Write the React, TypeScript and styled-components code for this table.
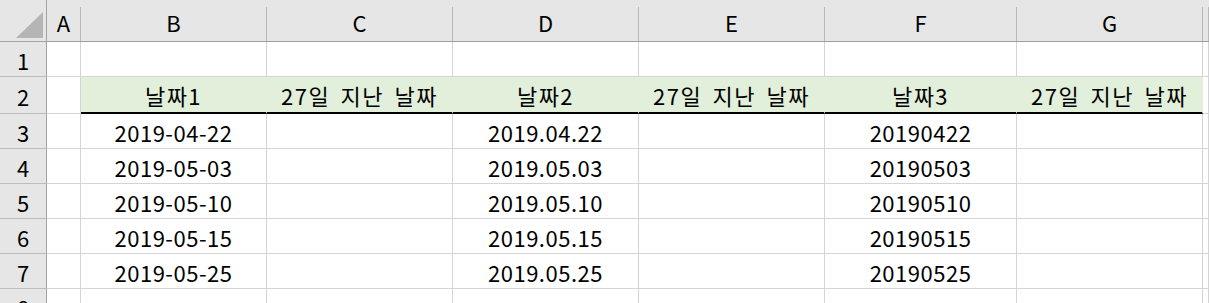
import React from "react";
import styled, { createGlobalStyle } from "styled-components";

const Global = createGlobalStyle`
  html, body { margin: 0; padding: 0; background: #ffffff; }
  body { font-family: "Noto Sans CJK KR", "Noto Sans", sans-serif; overflow: hidden; }
`;

const COLS = ["A", "B", "C", "D", "E", "F", "G", ""];
const WIDTHS = "47px 34px 186px 186px 186px 186px 192px 186px 1fr";

const Sheet = styled.div`
  display: grid;
  grid-template-columns: ${WIDTHS};
  grid-auto-rows: 35px;
  grid-template-rows: 42px 35px 37px;
  width: 1209px;
  height: 303px;
  overflow: hidden;
  font-size: 22px;
  color: #000;
`;

const Corner = styled.div`
  background: #e6e6e6;
  border-right: 1px solid #a3a3a3;
  border-bottom: 1px solid #a3a3a3;
  box-sizing: border-box;
  display: flex;
  align-items: flex-end;
  justify-content: flex-end;
  padding: 0 3px 3px 0;
`;

const ColHead = styled.div`
  background: #e6e6e6;
  border-bottom: 1px solid #9f9f9f;
  box-sizing: border-box;
  padding-top: 7px;
  display: flex;
`;

const ColLabel = styled.div`
  flex: 1;
  border-right: 1px solid #b9b9b9;
  display: flex;
  align-items: center;
  justify-content: center;
  padding-bottom: 4px;
  line-height: 1;
`;

const RowHead = styled.div`
  background: #e6e6e6;
  border-right: 1px solid #a3a3a3;
  border-bottom: 1px solid #bdbdbd;
  box-sizing: border-box;
  display: flex;
  align-items: center;
  justify-content: center;
  padding-top: 1px;
`;

const Cell = styled.div<{ $head?: boolean; $ruled?: boolean }>`
  box-sizing: border-box;
  border-right: 1px solid ${(p) => (p.$head ? "#e2efda" : "#d4d4d4")};
  border-bottom: ${(p) => (p.$ruled ? "2px solid #000" : "1px solid #d4d4d4")};
  background: ${(p) => (p.$head ? "#e2efda" : "#ffffff")};
  display: flex;
  align-items: center;
  justify-content: center;
  white-space: nowrap;
  padding-top: 1px;
  letter-spacing: ${(p) => (p.$head ? "1.5px" : "0.5px")};
  word-spacing: ${(p) => (p.$head ? "4px" : "0")};
`;

const rows: string[][] = [
  ["", "", "", "", "", "", "", ""],
  ["", "날짜1", "27일 지난 날짜", "날짜2", "27일 지난 날짜", "날짜3", "27일 지난 날짜", ""],
  ["", "2019-04-22", "", "2019.04.22", "", "20190422", "", ""],
  ["", "2019-05-03", "", "2019.05.03", "", "20190503", "", ""],
  ["", "2019-05-10", "", "2019.05.10", "", "20190510", "", ""],
  ["", "2019-05-15", "", "2019.05.15", "", "20190515", "", ""],
  ["", "2019-05-25", "", "2019.05.25", "", "20190525", "", ""],
  ["", "", "", "", "", "", "", ""],
];

export default function App() {
  return (
    <>
      <Global />
      <Sheet>
        <Corner>
          <svg width="27" height="26" viewBox="0 0 27 26">
            <polygon points="27,0 27,26 0,26" fill="#b5b5b5" />
          </svg>
        </Corner>
        {COLS.map((c, i) => (
          <ColHead key={i}>
            <ColLabel>{c}</ColLabel>
          </ColHead>
        ))}
        {rows.map((r, ri) => (
          <React.Fragment key={ri}>
            <RowHead>{ri + 1}</RowHead>
            {r.map((v, ci) => {
              const head = ri === 1 && ci >= 1 && ci <= 6;
              return (
                <Cell key={ci} $head={head} $ruled={head}>
                  {v}
                </Cell>
              );
            })}
          </React.Fragment>
        ))}
      </Sheet>
    </>
  );
}
